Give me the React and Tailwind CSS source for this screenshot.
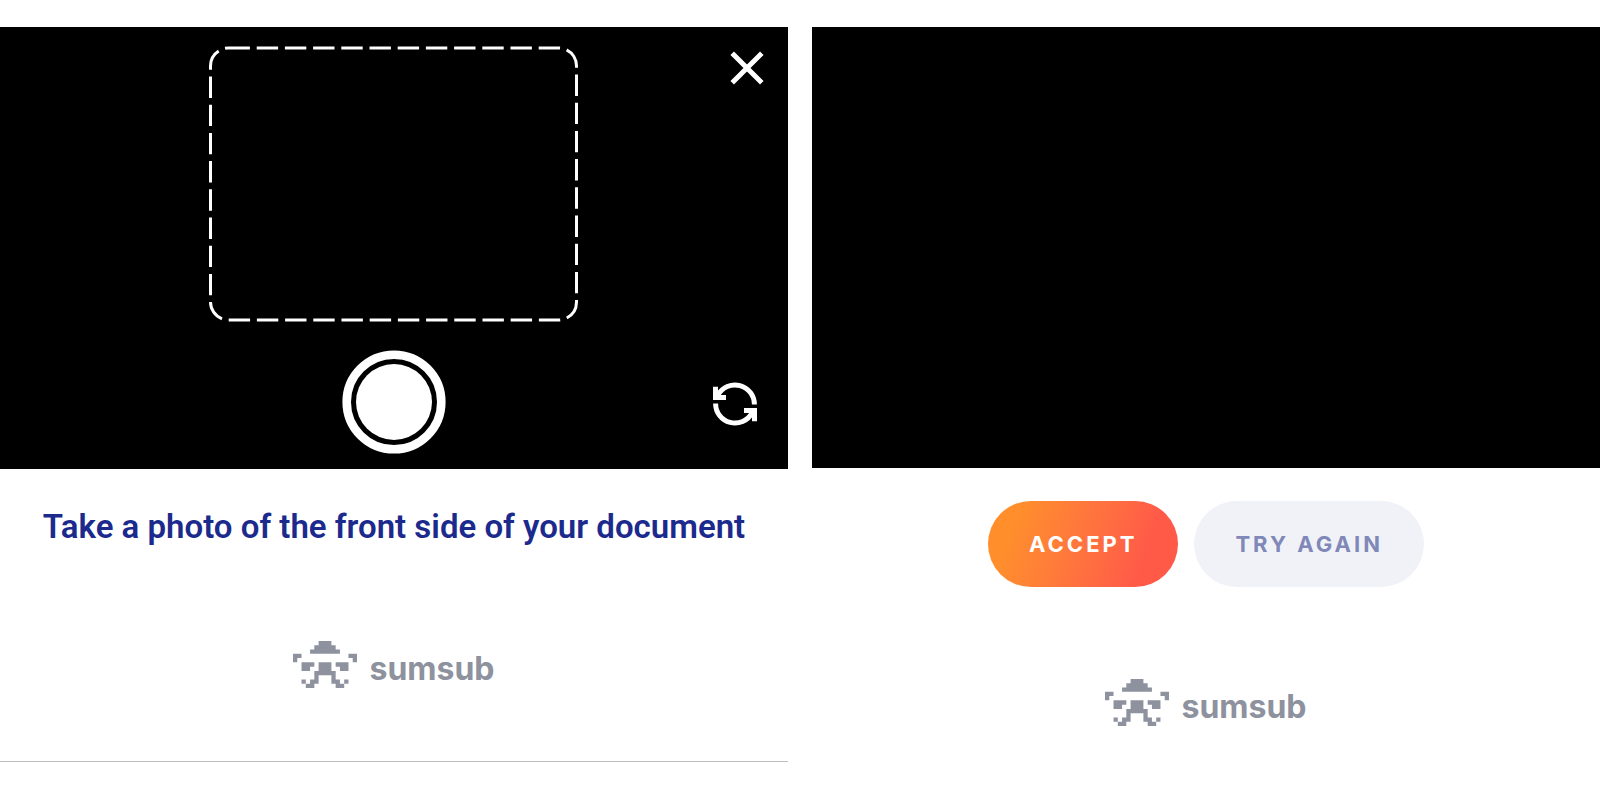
import { useState } from "react";

function Logo() {
  return (
    <div className="flex items-end justify-center gap-3 text-[#8d929e]">
      <svg viewBox="0 0 15 11" className="h-[47px] w-16" fill="currentColor" aria-hidden="true">
        {/* hat */}
        <path d="M6 0H9V1H10V2H11V3H4V2H5V1H6Z" />
        {/* hands */}
        <path d="M0 3H2V4H1V5H0ZM13 3H15V5H14V4H13Z" />
        {/* eyes */}
        <path d="M2 5H5V6H4V7H2ZM10 5H13V7H11V6H10Z" />
        {/* body and legs */}
        <path d="M6 5H9V7H10V9H11V10H12V11H10V10H9V8H6V10H5V11H3V10H4V9H5V7H6Z" />
        <path d="M2 9H3V10H2ZM12 9H13V10H12Z" />
      </svg>
      <span className="font-['Inter','Liberation_Sans',sans-serif] text-[32px] leading-[38px] font-bold">sumsub</span>
    </div>
  );
}

function CameraPanel() {
  const [flipped, setFlipped] = useState(false);

  return (
    <section className="border-b border-[#bfbfbf] pb-[73px]">
      <div className="relative flex flex-col items-center bg-black pt-[19px] pb-[15px]">
        {/* Document frame */}
        <svg viewBox="0 0 370 276" className="h-[276px] w-[370px]" fill="none" aria-hidden="true">
          <rect x="1.5" y="2" width="366" height="272" rx="18" stroke="white" strokeWidth="3" strokeDasharray="21.4 6.8" />
        </svg>
        <button type="button" aria-label="Take photo" className="mt-7 rounded-full">
          <svg viewBox="0 0 104 104" className="size-[104px]" aria-hidden="true">
            <circle cx="52" cy="52" r="47.3" fill="none" stroke="white" strokeWidth="8.6" />
            <circle cx="52" cy="52" r="38" fill="white" />
          </svg>
        </button>

        <button type="button" aria-label="Close" className="absolute top-6 right-6">
          <svg viewBox="0 0 34 34" className="size-[34px]" stroke="white" strokeWidth="5" aria-hidden="true">
            <path d="M2.2 2.2 31.8 31.8M31.8 2.2 2.2 31.8" />
          </svg>
        </button>
        <button
          type="button"
          aria-label="Switch camera"
          aria-pressed={flipped}
          onClick={() => setFlipped(!flipped)}
          className="absolute right-[31px] bottom-[43px]"
        >
          <svg viewBox="0 0 44 44" className="size-11" fill="none" stroke="white" strokeWidth="5" aria-hidden="true">
            <path d="M41.4 22.5A19.4 19.4 0 0 0 5 13" />
            <path d="M2.6 21.5A19.4 19.4 0 0 0 39 31" />
            <path d="M0 4.7H5V10L8 13H13V18H0Z" fill="white" stroke="none" />
            <path d="M44 39.3H39V34L36 31H31V26H44Z" fill="white" stroke="none" />
          </svg>
        </button>
      </div>

      <h1 className="mt-9 mb-[92px] text-center font-['Roboto','Liberation_Sans',sans-serif] text-[33px] leading-[44px] font-semibold text-[#1b2a8c]">
        Take a photo of the front side of your document
      </h1>
      <Logo />
    </section>
  );
}

function ReviewPanel() {
  return (
    <section>
      <div className="h-[441px] bg-black" />
      <div className="mt-[33px] mb-[92px] flex justify-center gap-4 font-['Inter','Liberation_Sans',sans-serif] text-[22px] leading-[26px] font-bold tracking-[3px]">
        <button type="button" className="rounded-full bg-linear-110 from-[#ff8e2b] from-15% to-[#ff5a48] to-80% px-[41px] py-[30px] text-white">
          ACCEPT
        </button>
        <button type="button" className="rounded-full bg-[#f1f2f7] px-[41px] py-[30px] text-[#7f88b8]">
          TRY AGAIN
        </button>
      </div>
      <Logo />
    </section>
  );
}

export default function App() {
  return (
    <main className="grid min-h-screen grid-cols-2 items-start gap-6 bg-white pt-[27px]">
      <CameraPanel />
      <ReviewPanel />
    </main>
  );
}
